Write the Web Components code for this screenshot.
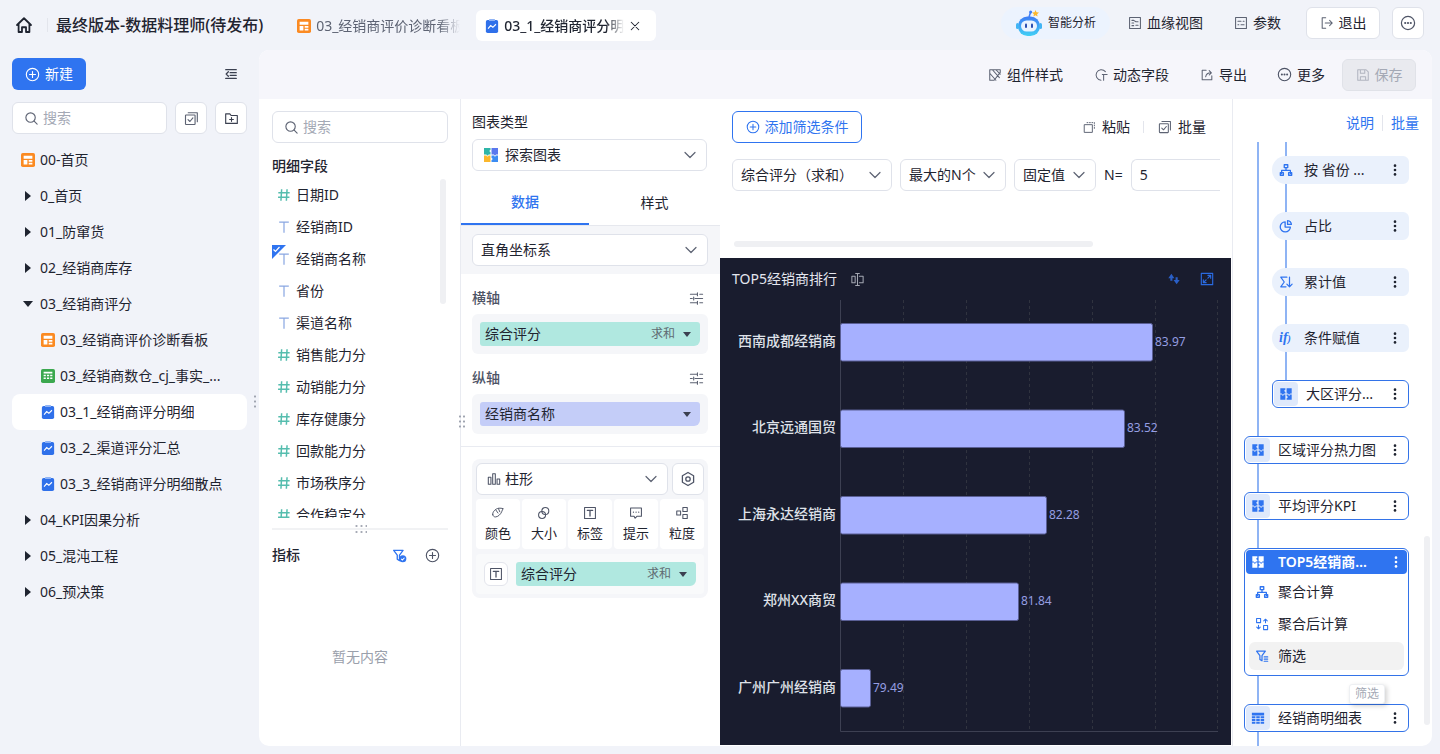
<!DOCTYPE html>
<html lang="zh">
<head>
<meta charset="utf-8">
<title>03_1_经销商评分明细</title>
<style>
  html, body { margin: 0; height: 754px; overflow: hidden; }
  body {
    background: #f1f3f9;
    color: #1f2430;
    font: 14px/20px "Noto Sans", "Noto Sans CJK SC", sans-serif;
  }
</style>
</head>
<body>
<app-shell></app-shell>
<script>
const S = (w, body) => `<g fill="none" stroke="currentColor" stroke-width="${w}" stroke-linecap="round" stroke-linejoin="round">${body}</g>`;
const ICONS = {
  home: S(1.6, '<path d="M1.800 8 8 2l6.200 6M3.200 7v7.200h3V10h3.600v4.200h3V7"/>'),
  plus: S(1.2, '<circle cx="8" cy="8" r="6.600"/><path d="M8 4.800v6.400M4.800 8h6.400"/>'),
  outdent: S(1.5, '<path d="M2 3h12M7 6.500h7M7 9.500h7M2 13h12M5 5.500 2.500 8 5 10.500"/>'),
  search: S(1.2, '<circle cx="7" cy="7" r="5"/><path d="m10.800 10.800 3.200 3.200"/>'),
  batch: S(1.2, '<rect x="1.600" y="4.200" width="10.200" height="10.200" rx=".6"/><path d="M4.500 1.800h9.700v9.700M4.300 9.200l2 2 3.200-3.800"/>'),
  folder: S(1.2, '<path d="M1.800 3h4.400l1.400 1.800h6.600v8.400H1.800zM8 7v4M6 9h4"/>'),
  close: S(1.4, '<path d="m3 3 10 10M13 3 3 13"/>'),
  more: S(1.2, '<circle cx="8" cy="8" r="6.600"/><circle cx="5.200" cy="8" r=".5"/><circle cx="8" cy="8" r=".5"/><circle cx="10.800" cy="8" r=".5"/>'),
  exit: S(1.2, '<path d="M6.500 2H2.500v12h4M6 8h8M11 5l3 3-3 3"/>'),
  blood: S(1.2, '<rect x="1.800" y="1.800" width="12.400" height="12.400"/><path d="M4.500 5h2M4.500 8h2M9 6.500h2.500M9 10.500h2.500M4.500 11h2M6.500 5 9 6.500"/>'),
  param: S(1.2, '<rect x="1.800" y="1.800" width="12.400" height="12.400"/><path d="M4.500 6h3.500M10.500 6h1M4.500 10h1M8 10h3.500"/>'),
  brush: S(1.2, '<path d="M2 2h12v3l-7 9H2zM2 6l7 8M5 2l8 9M9 2l5 5"/>'),
  dyn: S(1.2, '<path d="M13 4.200A6 6 0 1 0 8 14M9.500 7.500H15M11 7.500V14"/>'),
  share: S(1.2, '<path d="M7 2.500H2.500v11h11V9M6.500 10c.5-3 2.500-4.500 6-4.500M10.500 3l2.500 2.500L10.500 8"/>'),
  save: S(1.2, '<path d="M2 2h9.500L14 4.500V14H2zM5 2v4h5V2M5 14v-4h6v4"/>'),
  chev: S(1.2, '<path d="m3 5.500 5 5 5-5"/>'),
  sliders: S(1.2, '<path d="M1.500 3.500h7M11.500 3.500h3M1.500 8h2M6.500 8h8M1.500 12.500h7M11.500 12.500h3M9 2v3M5 6.500v3M9 11v3"/>'),
  gear: S(1.3, '<path d="m8 1.500 5.600 3.200v6.600L8 14.500l-5.600-3.200V4.700z"/><circle cx="8" cy="8" r="2.200"/>'),
  bars: S(1.2, '<rect x="1.500" y="6" width="3" height="8"/><rect x="6.500" y="2" width="3" height="12"/><rect x="11.500" y="8" width="3" height="6"/>'),
  palette: S(1.1, '<path d="M2 10c-.800-3 3-7 7-7.500 2-.2 3 .2 5 .5-1 .8-1 2-1.800 3.600C11 9.500 8 12.500 5 12.500c-1.500 0-2.600-1-3-2.500zM5.500 4.500 8 8M8.500 3 10 6.500"/>'),
  size: S(1.2, '<circle cx="9.500" cy="5.800" r="4"/><circle cx="5.800" cy="10.200" r="4"/>'),
  label: S(1.2, '<rect x="1.800" y="1.800" width="12.400" height="12.400"/><path d="M5 5h6M8 5v6.500" stroke-width="1.500"/>'),
  tip: S(1.2, '<path d="M1.800 2.200h12.400v9.600H9l-2 2.200-1.200-2.200h-4zM5 7h.2M8 7h.2M11 7h.2" />'),
  grain: S(1.2, '<rect x="9" y="1.800" width="5" height="4.400"/><rect x="9" y="9.800" width="5" height="4.400"/><rect x="2" y="5.800" width="4.400" height="4.400"/>'),
  paste: S(1.2, '<rect x="2" y="4.500" width="9.500" height="9.500"/><path d="M5 2h1M8 2h1M11 2h1M14 2v1M14 5v1M14 8v1"/>'),
  resize: S(1.1, '<path d="M2 4.500h3.500v7H2zM8 1.500v13M6 1.500h4M6 14.500h4M10 4.500h4v7h-4"/>'),
  sort: '<path fill="currentColor" d="M5 2 8.500 7H6.200v3H3.800V7H1.500zM11 14 7.500 9h2.300V6h2.400v3h2.300z"/>',
  expand: S(1.3, '<rect x="1.500" y="1.500" width="13" height="13"/><path d="M9 3.800h3.200V7M12 4 9 7M7 12.200H3.800V9M4 12l3-3"/>'),
  tree: S(1.5, '<rect x="6" y="2" width="4" height="3.200"/><path d="M8 5.200v3.300M3 12V8.500h10V12"/><rect x="1.500" y="11" width="3.500" height="3"/><rect x="11" y="11" width="3.500" height="3"/>'),
  pie: S(1.5, '<path d="M7 3.200a5.800 5.800 0 1 0 6 6H7zM9.800 1.800a5 5 0 0 1 4.400 4.400H9.800z"/>'),
  sum: S(1.4, '<path d="M9 2.500H2L6 8l-4 5.500h6M12 2.500v11M9 10.500l3 3 3-3"/>'),
  calc: S(1.2, '<rect x="1.800" y="1.800" width="4.600" height="4.600"/><rect x="9.800" y="9.800" width="4.600" height="4.600"/><path d="M12 6.500v-4M10 4.500l2-2 2 2M4 9.500v4M2 11.500l2 2 2-2"/>'),
  funnel: S(1.4, '<path d="M1.800 2.500h10L8 7.500v6L5.600 12V7.500zM10.500 9h4M10.500 11.500h4M10.500 14h4"/>'),
  funnelok: '<path d="M1.800 2.500h10L8 7.500v6L5.600 12V7.500z" fill="none" stroke="currentColor" stroke-width="1.400" stroke-linejoin="round"/><circle cx="11.500" cy="11.500" r="3.800" fill="currentColor"/><path d="m9.800 11.500 1.300 1.300 2.200-2.400" fill="none" stroke="#fff" stroke-width="1.100"/>',
  puzzle: '<path fill="currentColor" d="M1.500 1.500h5.800v1.700a1.200 1.200 0 0 0 0 2.400v1.700H5.600a1.200 1.200 0 0 1-2.400 0H1.500zM8.700 1.500h5.800v5.800h-1.700a1.200 1.200 0 0 1-2.400 0H8.700zM1.500 8.700h1.700a1.200 1.200 0 0 0 2.400 0h1.700v5.800H1.500zM8.700 8.700h1.700a1.200 1.200 0 0 0 2.400 0h1.700v5.800H8.700v-1.700a1.200 1.200 0 0 0 0-2.400z"/>',
  table: '<path fill="currentColor" d="M1 2h14v3H1zM1 6h4v2.300H1zM6 6h4v2.300H6zM11 6h4v2.300h-4zM1 9.200h4v2.300H1zM6 9.200h4v2.300H6zM11 9.200h4v2.300h-4zM1 12.400h4V14.500H1zM6 12.400h4V14.500H6zM11 12.400h4V14.500h-4z"/>',
  T: S(1.4, '<path d="M2.500 2.500h11M8 2.500v12" stroke-linecap="butt"/>'),
  hash: S(1.7, '<path d="M5.300 1.500 4.500 14.500M11.500 1.500l-.8 13M1.500 5.500h13M1.200 10.500h13" stroke-linecap="butt"/>'),
  dash: '<rect width="16" height="16" rx="2" fill="#fb8a22"/><path fill="#fff" d="M3 3h10v3.500H3zM3 8h4.300v5H3zM8.800 8H13v2H8.800zM8.800 11.200H13V13H8.800z"/>',
  sheet: '<rect width="16" height="16" rx="2" fill="#3ba84f"/><path fill="#fff" d="M3 3h10v2.200H3zM3 6.500h2.500v1.800H3zM6.800 6.500h2.500v1.800H6.800zM10.500 6.500H13v1.800h-2.500zM3 9.600h2.500v1.800H3zM6.800 9.600h2.500v1.800H6.800zM10.500 9.600H13v1.800h-2.500z"/>',
  chart: '<rect x="1" y="1.200" width="14" height="14.800" rx="2" fill="#2f70ea"/><rect x="4.500" y="0" width="7" height="2.400" rx="1" fill="#8fb3f5"/><path d="m3.500 11 3-3.500 2.500 2 3.500-3.500" fill="none" stroke="#fff" stroke-width="1.300"/>',
  explore: '<path fill="#2eb5a8" d="M1 1h6.500v2a1 1 0 0 0 0 2v2.500H5.500a1 1 0 0 1-2 0H1z"/><path fill="#5a78ee" d="M8.500 1H15v6.500h-2a1 1 0 0 1-2 0H8.500z"/><path fill="#fbb72c" d="M1 8.500h2.500a1 1 0 0 0 2 0h2V15H1z"/><path fill="#3c8cf2" d="M8.500 8.500H11a1 1 0 0 0 2 0h2V15H8.500v-2a1 1 0 0 0 0-2z"/>',
  robot: '<defs><linearGradient id="rb" x1="0" y1="0" x2="0" y2="1"><stop offset="0" stop-color="#3d7cf5"/><stop offset="1" stop-color="#41d0f5"/></linearGradient></defs><path d="M14 8 15.500 3.500" stroke="#3d7cf5" stroke-width="1.500"/><circle cx="15.600" cy="3" r="1.500" fill="#3d7cf5"/><path fill="#fbb72c" d="m20.500 1 1 2.300 2.500.3-1.900 1.600.5 2.400-2.100-1.300-2.100 1.300.5-2.400L17 3.600l2.500-.3z"/><rect x="3" y="7.500" width="22" height="19.500" rx="9.500" fill="url(#rb)"/><rect x="1" y="14" width="3" height="6" rx="1.500" fill="#41b5f5"/><rect x="24" y="14" width="3" height="6" rx="1.500" fill="#41b5f5"/><rect x="6" y="11.500" width="16" height="11" rx="5.500" fill="#eaf4ff"/><rect x="10" y="14.500" width="2" height="4.500" rx="1" fill="#2b4fb0"/><rect x="16" y="14.500" width="2" height="4.500" rx="1" fill="#2b4fb0"/>',
  vdots: '<g fill="currentColor"><circle cx="8" cy="3" r="1.500"/><circle cx="8" cy="8" r="1.500"/><circle cx="8" cy="13" r="1.500"/></g>'
};
const ico = (name, size = 14, color = '', vb = 16) =>
  `<svg width="${size}" height="${size}" viewBox="0 0 ${vb} ${vb}" style="flex:none;display:block;${color ? 'color:' + color : ''}">${ICONS[name]}</svg>`;

class Base extends HTMLElement {
  constructor() {
    super();
    this.shadow = this.attachShadow({ mode: 'open' });
  }
  connectedCallback() {
    this.shadow.innerHTML = this.renderHTML();
  }
}

// select box with chevron, used everywhere
class UiSelect extends Base {
  renderHTML() {
    const icon = this.getAttribute('icon');
    const small = this.hasAttribute('small-icon');
    return `
    <style>
      :host { display: flex; align-items: center; box-sizing: border-box; height: 32px; background: #fff;
        border: 1px solid #dfe2ea; border-radius: 6px; padding: 0 8px; white-space: nowrap; flex: none; }
      .t { flex: 1; }
      svg { margin-left: 2px; }
      .lead { margin-right: ${small ? 4 : 6}px; }
    </style>
    ${icon ? `<span class="lead">${ico(icon, small ? 14 : 16, '#4e5466')}</span>` : ''}
    <span class="t"><slot></slot></span>
    ${ico('chev', 16, '#5d6373')}`;
  }
}
customElements.define('ui-select', UiSelect);

class SearchBox extends Base {
  renderHTML() {
    return `
    <style>
      :host { display: flex; align-items: center; gap: 4px; box-sizing: border-box; height: 32px; background: #fff;
        border: 1px solid #dfe2ea; border-radius: 6px; padding: 0 11px; color: #a4a9b5; }
    </style>
    ${ico('search', 15, '#5d6373')}<span>搜索</span>`;
  }
}
customElements.define('search-box', SearchBox);

class TopBar extends Base {
  renderHTML() {
    return `
    <style>
      :host { display: flex; height: 50px; align-items: flex-start; white-space: nowrap; }
      .home { margin: 16px 0 0 15px; }
      .sep { width: 1px; height: 14px; background: #e3e5ec; margin: 18px 8px 0 14px; }
      h1 { font-size: 16px; font-weight: 500; margin: 13px 25px 0 0; line-height: 24px; }
      .tab { display: flex; align-items: center; height: 31px; margin-top: 10px; padding-left: 9px; gap: 5px; box-sizing: border-box; }
      .tab span { overflow: hidden; -webkit-mask-image: linear-gradient(90deg, #000 85%, transparent); mask-image: linear-gradient(90deg, #000 85%, transparent); }
      .t1 { width: 180px; margin-right: 8px; color: #5d6373; }
      .t1 span { width: 144px; }
      .t2 { width: 180px; background: #fff; border-radius: 6px; font-weight: 500; }
      .t2 span { width: 120px; }
      .right { margin-left: auto; margin-top: 7px; margin-right: 16px; display: flex; align-items: center; height: 32px; }
      .ai { display: flex; align-items: center; gap: 5px; height: 32px; width: 109px; box-sizing: border-box; padding-left: 14px;
        background: #ecf3fe; border-radius: 16px; font-size: 12px; margin-right: 18px; }
      .lnk { display: flex; align-items: center; gap: 5px; }
      .btn { display: flex; align-items: center; justify-content: center; gap: 5px; height: 32px; box-sizing: border-box;
        background: #fff; border: 1px solid #dfe2ea; border-radius: 6px; }
    </style>
    <div class="home">${ico('home', 18, '#1f2430')}</div>
    <div class="sep"></div>
    <h1>最终版本-数据料理师(待发布)</h1>
    <div class="tab t1">${ico('dash', 14)}<span>03_经销商评价诊断看板</span></div>
    <div class="tab t2">${ico('chart', 14)}<span>03_1_经销商评分明细</span>${ico('close', 12, '#1f2430')}</div>
    <div class="right">
      <div class="ai">${ico('robot', 28, '', 28)}<span>智能分析</span></div>
      <div class="lnk" style="margin-right:31px">${ico('blood', 14, '#5d6373')}血缘视图</div>
      <div class="lnk" style="margin-right:25px">${ico('param', 14, '#5d6373')}参数</div>
      <div class="btn" style="width:74px;margin-right:12px">${ico('exit', 14, '#5d6373')}退出</div>
      <div class="btn" style="width:32px">${ico('more', 16, '#4e5466')}</div>
    </div>`;
  }
}
customElements.define('top-bar', TopBar);

class TreeItem extends Base {
  renderHTML() {
    const icon = this.getAttribute('icon');
    const arrow = this.getAttribute('arrow');
    const depth = this.getAttribute('depth') || 0;
    const lead = arrow
      ? `<i class="arrow ${arrow}"></i>`
      : ico(icon, 14);
    return `
    <style>
      :host { display: flex; align-items: center; height: 36px; padding-left: ${depth ? 29 : 9}px; gap: 5px; white-space: nowrap; border-radius: 8px; }
      :host([active]) { background: #fff; }
      .arrow { display: block; box-sizing: border-box; width: 14px; height: 0; position: relative; }
      .arrow::after { content: ""; position: absolute; border-style: solid; border-color: transparent; }
      .arrow.right::after { left: 4px; top: -5px; border-width: 5px 0 5px 6px; border-left-color: #1f2430; }
      .arrow.down::after { left: 2px; top: -3px; border-width: 6px 5px 0 5px; border-top-color: #1f2430; }
      span { overflow: hidden; text-overflow: ellipsis; }
    </style>
    ${lead}<span><slot></slot></span>`;
  }
}
customElements.define('tree-item', TreeItem);

class SideBar extends Base {
  renderHTML() {
    return `
    <style>
      :host { display: flex; flex-direction: column; width: 259px; flex: none; box-sizing: border-box; padding: 8px 12px 0; position: relative; }
      .head { display: flex; justify-content: space-between; align-items: center; height: 32px; }
      .new { display: flex; align-items: center; justify-content: center; gap: 5px; width: 74px; height: 32px;
        background: #2f74f0; color: #fff; border-radius: 6px; }
      .collapse { margin-right: 9px; }
      .row { display: flex; gap: 8px; margin: 12px 0 8px; }
      search-box { width: 155px; }
      .sq { display: flex; align-items: center; justify-content: center; width: 32px; height: 32px; box-sizing: border-box;
        background: #fff; border: 1px solid #dfe2ea; border-radius: 6px; }
      .grip { position: absolute; left: 254px; top: 344px; width: 2px; height: 14px;
        background: radial-gradient(circle, #9fa4b0 1px, transparent 1.200px) 0 0 / 2px 5px; }
    </style>
    <div class="head">
      <div class="new">${ico('plus', 15, '#fff')}新建</div>
      <div class="collapse">${ico('outdent', 14, '#3b4050')}</div>
    </div>
    <div class="row">
      <search-box></search-box>
      <div class="sq">${ico('batch', 15, '#5d6373')}</div>
      <div class="sq">${ico('folder', 15, '#3b4050')}</div>
    </div>
    <tree-item icon="dash">00-首页</tree-item>
    <tree-item arrow="right">0_首页</tree-item>
    <tree-item arrow="right">01_防窜货</tree-item>
    <tree-item arrow="right">02_经销商库存</tree-item>
    <tree-item arrow="down">03_经销商评分</tree-item>
    <tree-item depth="1" icon="dash">03_经销商评价诊断看板</tree-item>
    <tree-item depth="1" icon="sheet">03_经销商数仓_cj_事实_...</tree-item>
    <tree-item depth="1" icon="chart" active>03_1_经销商评分明细</tree-item>
    <tree-item depth="1" icon="chart">03_2_渠道评分汇总</tree-item>
    <tree-item depth="1" icon="chart">03_3_经销商评分明细散点</tree-item>
    <tree-item arrow="right">04_KPI因果分析</tree-item>
    <tree-item arrow="right">05_混沌工程</tree-item>
    <tree-item arrow="right">06_预决策</tree-item>
    <div class="grip"></div>`;
  }
}
customElements.define('side-bar', SideBar);

class FieldRow extends Base {
  renderHTML() {
    const num = this.getAttribute('type') === 'num';
    return `
    <style>
      :host { display: flex; align-items: center; height: 32px; padding-left: 5px; gap: 5px; position: relative; flex: none; }
      .flag { position: absolute; left: 0; top: 2px; }
    </style>
    ${this.hasAttribute('used') ? `<svg class="flag" width="14" height="14" viewBox="0 0 14 14"><path fill="#2f74f0" d="M0 0h14L0 14z"/><path fill="none" stroke="#fff" stroke-width="1.200" d="m1.500 4.500 2 2 4-4.500"/></svg>` : ''}
    ${num ? ico('hash', 14, '#55bdae') : ico('T', 14, '#8aa7e2')}
    <span><slot></slot></span>`;
  }
}
customElements.define('field-row', FieldRow);

class FieldPanel extends Base {
  renderHTML() {
    return `
    <style>
      :host { display: flex; flex-direction: column; width: 202px; flex: none; box-sizing: border-box; padding: 12px 12px 0 13px; border-right: 1px solid #e9ebf1; position: relative; }
      b { display: block; font-weight: 500; line-height: 22px; }
      .title { margin: 12px 0 2px; }
      .list { display: flex; flex-direction: column; height: 339px; overflow: hidden; }
      .bar { position: absolute; left: 181px; top: 80px; width: 6px; height: 125px; border-radius: 3px; background: #eff0f3; }
      .split { height: 2px; background: #f1f2f4; margin-top: 10px; position: relative; }
      .split::before, .split::after { content: ""; position: absolute; left: 82px; width: 13px; height: 2px;
        background: radial-gradient(circle, #a6aab5 1px, transparent 1.200px) 0 0 / 5px 2px; }
      .split::before { top: -3px; } .split::after { top: 3px; }
      .metric { display: flex; align-items: center; height: 20px; margin-top: 15px; }
      .metric b { flex: 1; }
      .metric .flt { margin-right: 18px; }
      .metric .add { margin-right: 8px; }
      .empty { text-align: center; color: #9aa0ab; margin-top: 82px; }
    </style>
    <search-box></search-box>
    <b class="title">明细字段</b>
    <div class="list">
      <field-row type="num">日期ID</field-row>
      <field-row>经销商ID</field-row>
      <field-row used>经销商名称</field-row>
      <field-row>省份</field-row>
      <field-row>渠道名称</field-row>
      <field-row type="num">销售能力分</field-row>
      <field-row type="num">动销能力分</field-row>
      <field-row type="num">库存健康分</field-row>
      <field-row type="num">回款能力分</field-row>
      <field-row type="num">市场秩序分</field-row>
      <field-row type="num">合作稳定分</field-row>
    </div>
    <div class="bar"></div>
    <div class="split"></div>
    <div class="metric"><b>指标</b><span class="flt">${ico('funnelok', 15, '#2f74f0')}</span><span class="add">${ico('plus', 15, '#4e5466')}</span></div>
    <div class="empty">暂无内容</div>`;
  }
}
customElements.define('field-panel', FieldPanel);

class AxisChip extends Base {
  renderHTML() {
    const agg = this.getAttribute('agg');
    return `
    <style>
      :host { display: flex; align-items: center; height: 24px; border-radius: 3px 3px 6px 3px; padding: 0 9px 0 5px;
        background: var(--chip, #b0e8e0); flex: 1; white-space: nowrap; }
      .t { flex: 1; }
      .a { color: #5f6b72; font-size: 12px; margin-right: 8px; }
      i { width: 0; height: 0; border-style: solid; border-width: 5px 4px 0 4px; border-color: #3b4050 transparent transparent; }
    </style>
    <span class="t"><slot></slot></span>${agg ? `<span class="a">${agg}</span>` : ''}<i></i>`;
  }
}
customElements.define('axis-chip', AxisChip);

class AxisBlock extends Base {
  renderHTML() {
    return `
    <style>
      :host { display: block; }
      .h { display: flex; justify-content: space-between; align-items: center; height: 24px; font-weight: 500; color: #4e5466; padding-right: 4px; }
      .box { display: flex; margin-top: 4px; height: 40px; box-sizing: border-box; padding: 8px; background: #f5f6f9; border-radius: 6px; }
    </style>
    <div class="h">${this.getAttribute('label')}${ico('sliders', 15, '#5d6373')}</div>
    <div class="box"><slot></slot></div>`;
  }
}
customElements.define('axis-block', AxisBlock);

class MarkCard extends Base {
  renderHTML() {
    return `
    <style>
      :host { display: flex; flex-direction: column; align-items: center; width: 44px; height: 50px; background: #fff; border-radius: 4px; padding-top: 7px; box-sizing: border-box; gap: 3px; font-size: 13px; line-height: 20px; }
    </style>
    ${ico(this.getAttribute('icon'), 14, '#4e5466')}<span><slot></slot></span>`;
  }
}
customElements.define('mark-card', MarkCard);

class ConfigPanel extends Base {
  renderHTML() {
    return `
    <style>
      :host { display: block; width: 259px; flex: none; position: relative; }
      .type { padding: 12px 13px 0 11px; }
      .type div { line-height: 22px; height: 28px; }
      ui-select { width: 100%; }
      .tabs { display: flex; height: 45px; margin-top: 9px; border-bottom: 1px solid #e6e8ee; }
      .tabs div { flex: 1; display: flex; align-items: center; justify-content: center; box-sizing: border-box; height: 45px; }
      .tabs .on { flex: none; width: 128px; color: #2f74f0; font-weight: 500; border-bottom: 2px solid #2f74f0; }
      .coord { background: #f5f6f9; padding: 8px 12px 8px 11px; }
      .axes { padding: 12px 12px 12px 11px; display: flex; flex-direction: column; gap: 12px; border-bottom: 1px solid #e9ebf1; }
      .marks { margin: 12px 12px 0 11px; padding: 4px; background: #f5f6f9; border-radius: 8px; }
      .mrow { display: flex; gap: 4px; }
      .gear { display: flex; align-items: center; justify-content: center; width: 32px; height: 32px; box-sizing: border-box; background: #fff; border: 1px solid #dfe2ea; border-radius: 6px; }
      .cards { display: flex; gap: 2px; margin: 4px 0 5px; }
      .sub { display: flex; align-items: center; gap: 8px; height: 40px; padding: 0 8px; background: #f9fafb; border-radius: 4px; }
      .tbtn { display: flex; align-items: center; justify-content: center; width: 24px; height: 24px; box-sizing: border-box; background: #fff; border: 1px solid #e3e5ec; border-radius: 6px; flex: none; }
      .grip { position: absolute; left: -3px; top: 315px; width: 8px; height: 14px;
        background: radial-gradient(circle, #9fa4b0 1px, transparent 1.200px) 0 0 / 4px 5px; }
    </style>
    <div class="type">
      <div>图表类型</div>
      <ui-select icon="explore">探索图表</ui-select>
    </div>
    <div class="tabs"><div class="on">数据</div><div>样式</div></div>
    <div class="coord"><ui-select>直角坐标系</ui-select></div>
    <div class="axes">
      <axis-block label="横轴"><axis-chip agg="求和">综合评分</axis-chip></axis-block>
      <axis-block label="纵轴"><axis-chip style="--chip:#c4cdf8">经销商名称</axis-chip></axis-block>
    </div>
    <div class="marks">
      <div class="mrow">
        <ui-select icon="bars" small-icon style="width:192px">柱形</ui-select>
        <div class="gear">${ico('gear', 16, '#4e5466')}</div>
      </div>
      <div class="cards">
        <mark-card icon="palette">颜色</mark-card>
        <mark-card icon="size">大小</mark-card>
        <mark-card icon="label">标签</mark-card>
        <mark-card icon="tip">提示</mark-card>
        <mark-card icon="grain">粒度</mark-card>
      </div>
      <div class="sub">
        <div class="tbtn">${ico('label', 14, '#4e5466')}</div>
        <axis-chip agg="求和">综合评分</axis-chip>
      </div>
    </div>
    <div class="grip"></div>`;
  }
}
customElements.define('config-panel', ConfigPanel);

class BarChart extends Base {
  renderHTML() {
    const rows = [
      ['西南成都经销商', 312, '83.97'],
      ['北京远通国贸', 284, '83.52'],
      ['上海永达经销商', 206, '82.28'],
      ['郑州XX商贸', 178, '81.84'],
      ['广州广州经销商', 30, '79.49']
    ];
    const grid = [183, 246, 309, 372, 435, 497].map(x =>
      `<line x1="${x + .5}" y1="0" x2="${x + .5}" y2="431" stroke="#30333f" stroke-dasharray="3 3"/>`).join('');
    const bars = rows.map((r, i) => {
      const y = 23.500 + i * 86.500;
      return `<rect x="120.500" y="${y}" width="${r[1]}" height="37.500" rx="2" fill="#a6b0ff" stroke="#5a5f95"/>
        <text x="116" y="${y + 22}" text-anchor="end" fill="#dfe1e8" font-size="14" font-weight="500">${r[0]}</text>
        <text x="${123 + r[1]}" y="${y + 22}" fill="#959ee2" font-size="12">${r[2]}</text>`;
    }).join('');
    return `
    <style>
      :host { display: flex; flex-direction: column; height: 487px; background: #191c2e; flex: none; }
      .h { display: flex; align-items: center; height: 42px; padding: 0 17px 0 12px; color: #e4e6ee; flex: none; }
      .h span { margin-right: 13px; }
      .sp { flex: 1; }
      svg.plot { display: block; }
    </style>
    <div class="h"><span>TOP5经销商排行</span>${ico('resize', 15, '#a4a7b2')}<div class="sp"></div>${ico('sort', 14, '#2a5fc7')}<div style="width:19px"></div>${ico('expand', 14, '#2a6ae0')}</div>
    <svg class="plot" width="511" height="445" viewBox="0 0 511 445" style="font-family:inherit">
      ${grid}
      <path d="M120.500 0V431.500H498" fill="none" stroke="#3d4052"/>
      ${bars}
    </svg>`;
  }
}
customElements.define('bar-chart', BarChart);

class FilterPanel extends Base {
  renderHTML() {
    return `
    <style>
      :host { display: block; height: 159px; box-sizing: border-box; padding: 12px 0 0 12px; flex: none; position: relative; }
      .r1 { display: flex; align-items: center; height: 32px; padding-right: 25px; }
      .add { display: flex; align-items: center; justify-content: center; gap: 5px; width: 130px; height: 32px; box-sizing: border-box;
        border: 1px solid #2f74f0; border-radius: 6px; color: #2f74f0; margin-right: auto; }
      .lk { display: flex; align-items: center; gap: 6px; }
      .d { width: 1px; height: 12px; background: #e3e5ec; margin: 0 14px 0 13px; }
      .r2 { display: flex; align-items: center; margin-top: 16px; gap: 8px; }
      .inp { width: 89px; height: 32px; box-sizing: border-box; border: 1px solid #dfe2ea; border-right: 0; border-radius: 6px 0 0 6px; line-height: 30px; padding-left: 8px; }
      .bar { position: absolute; left: 14px; top: 142px; width: 359px; height: 6px; border-radius: 3px; background: #eff0f3; }
    </style>
    <div class="r1">
      <div class="add">${ico('plus', 14, '#2f74f0')}添加筛选条件</div>
      <div class="lk">${ico('paste', 13, '#5d6373')}粘贴</div><div class="d"></div>
      <div class="lk">${ico('batch', 14, '#5d6373')}批量</div>
    </div>
    <div class="r2">
      <ui-select style="width:160px">综合评分（求和）</ui-select>
      <ui-select style="width:106px">最大的N个</ui-select>
      <ui-select style="width:82px">固定值</ui-select>
      <span>N=</span>
      <div class="inp">5</div>
    </div>
    <div class="bar"></div>`;
  }
}
customElements.define('filter-panel', FilterPanel);

class FlowNode extends Base {
  renderHTML() {
    const kind = this.getAttribute('kind') || 'chip';
    const name = this.getAttribute('icon');
    const on = kind === 'head';
    const iconEl = kind === 'chip'
      ? (name === 'ifx' ? '<em>if<small>)</small></em>' : ico(name, 14, '#2f74f0'))
      : `<div class="blk">${ico(name, 14, on ? '#fff' : '#2f74f0')}</div>`;
    return `
    <style>
      :host { display: flex; align-items: center; height: 28px; box-sizing: border-box; flex: none; white-space: nowrap; }
      :host([kind="chip"]) { background: #eaf1fc; border-radius: 14px 6px 6px 14px; padding-left: 7px; }
      :host([kind="card"]) { background: #fff; border: 1px solid #3373e8; border-radius: 6px; padding-left: 1px; }
      :host([kind="head"]) { background: #2f74f0; border-radius: 4px; height: 24px; color: #fff; font-weight: 600; }
      .blk { width: 24px; height: 24px; display: flex; align-items: center; justify-content: center; border-radius: 4px; background: #dfe9fb; flex: none; }
      :host([kind="head"]) .blk { background: none; }
      em { display: block; width: 14px; font: italic 700 14px/14px "Liberation Serif", serif; color: #2f74f0; white-space: nowrap; }
      em small { font-size: 10px; }
      .t { flex: 1; min-width: 0; overflow: hidden; text-overflow: ellipsis; margin-left: ${kind === 'chip' ? 11 : 8}px; }
      .m { width: 14px; margin-right: ${on ? 4 : kind === 'card' ? 6 : 7}px; flex: none; }
    </style>
    ${iconEl}<span class="t"><slot></slot></span><span class="m">${ico('vdots', 14, on ? '#fff' : '#1f2430')}</span>`;
  }
}
customElements.define('flow-node', FlowNode);

class FlowPanel extends Base {
  renderHTML() {
    return `
    <style>
      :host { display: flex; flex-direction: column; width: 200px; flex: none; position: relative; border-left: 1px solid #e9ebf1; box-sizing: border-box; overflow: hidden; }
      .links { display: flex; justify-content: flex-end; align-items: center; height: 43px; padding: 5px 13px 0 0; box-sizing: border-box; color: #2f74f0; flex: none; }
      .links i { width: 1px; height: 16px; background: #e3e5ec; margin: 0 8px; }
      .body { flex: 1; display: flex; flex-direction: column; gap: 28px; padding: 0 23px 0 11px;
        background: linear-gradient(#8fb4f4, #8fb4f4) 24px 0 / 2px 100% no-repeat; }
      .group { display: flex; flex-direction: column; gap: 28px; padding: 14px 0 0 28px;
        background: linear-gradient(#8fb4f4, #8fb4f4) 41px 0 / 2px 100% no-repeat; }
      .open { display: flex; flex-direction: column; height: 128px; box-sizing: border-box; background: #fff; border: 1px solid #3373e8; border-radius: 6px; padding: 1px; flex: none; }
      .sub { display: flex; align-items: center; gap: 9px; height: 28px; margin: 0 3px 4px; padding-left: 6px; border-radius: 6px; }
      .sub:first-of-type { margin-top: 4px; }
      .sub.hi { background: #f2f2f2; }
      .bar { position: absolute; left: 191px; top: 437px; width: 6px; height: 189px; border-radius: 3px; background: #eff0f3; }
      .tip { position: absolute; left: 116px; top: 585px; width: 36px; height: 20px; box-sizing: border-box; background: #fff; border: 1px solid #eef0f3;
        border-radius: 3px; box-shadow: 2px 2px 5px rgba(0,0,0,.18); font-size: 12px; line-height: 18px; text-align: center; color: #a4a9b5; }
    </style>
    <div class="links">说明<i></i>批量</div>
    <div class="body">
      <div class="group">
        <flow-node kind="chip" icon="tree">按 省份 ...</flow-node>
        <flow-node kind="chip" icon="pie">占比</flow-node>
        <flow-node kind="chip" icon="sum">累计值</flow-node>
        <flow-node kind="chip" icon="ifx">条件赋值</flow-node>
        <flow-node kind="card" icon="puzzle">大区评分…</flow-node>
      </div>
      <flow-node kind="card" icon="puzzle">区域评分热力图</flow-node>
      <flow-node kind="card" icon="puzzle">平均评分KPI</flow-node>
      <div class="open">
        <flow-node kind="head" icon="puzzle">TOP5经销商…</flow-node>
        <div class="sub">${ico('tree', 14, '#2f74f0')}聚合计算</div>
        <div class="sub">${ico('calc', 14, '#2f74f0')}聚合后计算</div>
        <div class="sub hi">${ico('funnel', 14, '#2f74f0')}筛选</div>
      </div>
      <flow-node kind="card" icon="table">经销商明细表</flow-node>
    </div>
    <div class="bar"></div>
    <div class="tip">筛选</div>`;
  }
}
customElements.define('flow-panel', FlowPanel);

class MainCard extends Base {
  renderHTML() {
    return `
    <style>
      :host { display: flex; flex-direction: column; width: 1173px; height: 696px; background: #fff; border-radius: 10px; overflow: hidden; flex: none; }
      .tools { display: flex; align-items: center; justify-content: flex-end; height: 49px; flex: none; background: #f6f6fb; padding-right: 16px; }
      .tools div { display: flex; align-items: center; gap: 5px; margin-right: 31px; white-space: nowrap; }
      .tools div:nth-child(3) { margin-right: 30px; }
      .tools div:nth-child(4) { margin-right: 17px; }
      .tools .save { width: 74px; height: 32px; margin: 0; justify-content: center; background: #e9eaef; border: 1px solid #e0e2e8; border-radius: 6px; color: #a4a9b5; box-sizing: border-box; }
      .cols { display: flex; flex: 1; min-height: 0; }
      .mid { display: flex; flex-direction: column; width: 511px; flex: none; }
      .mid + flow-panel { margin-left: 1px; }
    </style>
    <div class="tools">
      <div>${ico('brush', 14, '#5d6373')}组件样式</div>
      <div>${ico('dyn', 14, '#5d6373')}动态字段</div>
      <div>${ico('share', 14, '#5d6373')}导出</div>
      <div>${ico('more', 15, '#4e5466')}更多</div>
      <div class="save">${ico('save', 14, '#b1b5c0')}保存</div>
    </div>
    <div class="cols">
      <field-panel></field-panel>
      <config-panel></config-panel>
      <div class="mid">
        <filter-panel></filter-panel>
        <bar-chart></bar-chart>
      </div>
      <flow-panel></flow-panel>
    </div>`;
  }
}
customElements.define('main-card', MainCard);

class AppShell extends Base {
  renderHTML() {
    return `
    <style>
      :host { display: block; width: 1440px; height: 754px; overflow: hidden; }
      .row { display: flex; }
    </style>
    <top-bar></top-bar>
    <div class="row"><side-bar></side-bar><main-card></main-card></div>`;
  }
}
customElements.define('app-shell', AppShell);
</script>
</body>
</html>
